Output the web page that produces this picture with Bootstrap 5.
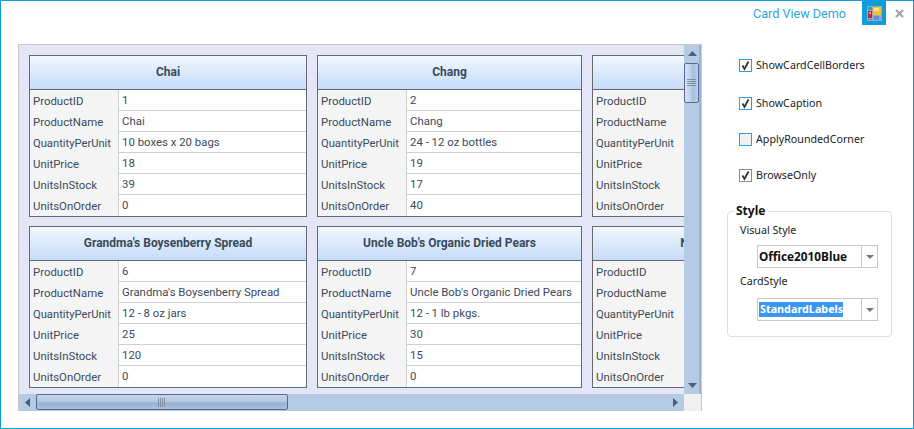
<!DOCTYPE html>
<html lang="en"><head><meta charset="utf-8"><title>Card View Demo</title>
<link href="https://cdn.jsdelivr.net/npm/bootstrap@5.3.0/dist/css/bootstrap.min.css" rel="stylesheet">
<style>
html,body{margin:0;background:#fff;overflow:hidden}
body{font-family:Roboto,"Noto Sans",sans-serif;font-size:11.4px;line-height:1;color:#3b4a5c}
.win{width:914px;height:429px;border:1px solid #0c9fdc;background:#fff;overflow:hidden}
.titlebar{height:24px;padding-right:1px}
.wintitle{color:#2ba4e0;font-size:12.6px;margin-right:16px;padding-top:3px}
.wintile{width:24px;height:24px;background:#0f9cd8}
.winclose{width:26px}
.viewer{width:684px;height:367px;margin:19px 0 0 17px;border:1px solid #c8c8c8;background:#e4e6f8}
.viewmain{height:349px}
.cardsarea{width:665px;height:349px;overflow:hidden;padding:10px 0 0 10px}
.cardgrid{display:grid;grid-template-columns:278px 265px 335px;grid-template-rows:162px 162px;gap:9px 10px;width:898px}
.pcard{border:1px solid #666a70;background:#fff;display:flex;flex-direction:column}
.pcap{height:34px;flex:none;border-bottom:1px solid #666a70;background:linear-gradient(#f1f7fe,#c5dcf9);font-weight:700;font-size:12px;color:#3a4a5a;padding-bottom:2px}
.prow{height:21px;flex:none;display:flex}
.plab{width:89px;flex:none;background:#f4f4f4;padding:6px 0 0 3px;white-space:nowrap;border-right:1px solid #cfcfcf}
.plab-q{font-size:11.2px}
.pval{flex:1;padding:5px 0 0 3px;border-bottom:1px solid #cfcfcf;white-space:nowrap}
.pcard-wide .plab{width:110px;border-right:0}
.prow:last-child .pval{border-bottom:0}
.vbar{width:17px;background:#b5cae3;border-right:2px solid #9bb3d3}
.hbar{height:17px;background:#b5cae3}
.sbtn{flex:none;width:17px;height:17px}
.vthumb{height:40px;width:15px;border:1px solid #55699c;border-radius:2px;background:linear-gradient(90deg,#d7e3f3 0,#bdd0e8 45%,#a6bcd9 60%,#bcd0e8 100%);margin-top:1px}
.hthumb{width:252px;height:16px;border:1px solid #55699c;border-radius:2px;background:linear-gradient(#c4d5ea,#b4c9e2 45%,#9ab2d1 60%,#a9c0dc)}
.corner{width:17px;height:17px;background:#f0f0f0}
.side{width:165px;margin:0 0 0 25px;padding-top:34px;font-family:"Noto Sans",sans-serif;font-size:10.7px;color:#222}
.chk{height:13px;margin-left:12px;white-space:nowrap}
.chk1{margin-bottom:25px}
.chk2{margin-bottom:23px}
.chk3{margin-bottom:23px}
.box{width:13px;height:13px;border:1px solid #29a0da;background:#fff;margin-right:4px;flex:none}
.box-off{background:#f1f1f1}
.box-gray{border-color:#8c8c8c}
.fld{margin-top:29px;height:126px;border:1px solid #d9dfe6;border-radius:4px;padding:13px 0 0 12px;position:relative}
.fldlegend{position:absolute;left:6px;top:-7px;background:#fff;padding:0 2px;font-weight:700;font-size:12px;color:#111}
.fldlabel{height:13px;color:#222}
.combo{width:121px;height:23px;margin:7px 0 0 17px;border:1px solid #c8c8c8;background:#fff;font-weight:700;font-size:11.8px;color:#111}
.combo2{margin-top:9px}
.comboval{flex:1;padding-left:1px}
.comboarrow{width:16px;border-left:1px solid #c8c8c8}
.sel{background:#3a97f0;color:#fff;height:15px;padding:2px 0 0 1px;display:inline-block;font-size:10.8px}
.lab2{margin-top:8px}
</style></head><body>
<div class="win d-flex flex-column">
 <div class="titlebar d-flex justify-content-end align-items-center flex-none">
  <div class="wintitle">Card View Demo</div>
  <div class="wintile d-flex align-items-center justify-content-center">
   <svg width="15" height="15" viewBox="0 0 15 15"><rect width="15" height="15" fill="#9ba9b4"/><rect x="1" y="1" width="4" height="3" fill="#3e97c9"/><rect x="6" y="1" width="8" height="8" fill="#f7c22a"/><rect x="7" y="2" width="5" height="3" fill="#fde27e"/><rect x="1" y="5" width="4" height="7" fill="#c0262b"/><rect x="2" y="6" width="2" height="2" fill="#ef9a8a"/><rect x="1" y="13" width="4" height="1" fill="#3e97c9"/><rect x="7" y="10" width="5" height="4" fill="#5b8fdb"/></svg>
  </div>
  <div class="winclose d-flex justify-content-center">
   <svg width="9" height="9" viewBox="0 0 9 9"><path d="M1 1L8 8M8 1L1 8" stroke="#a3a3a3" stroke-width="2.2" fill="none"/></svg>
  </div>
 </div>
 <div class="d-flex align-items-start">
  <div class="viewer d-flex flex-column">
   <div class="viewmain d-flex">
    <div class="cardsarea">
     <div class="cardgrid">
      <div class="pcard">
       <div class="pcap d-flex align-items-center justify-content-center">Chai</div>
       <div class="prow"><div class="plab">ProductID</div><div class="pval">1</div></div>
       <div class="prow"><div class="plab">ProductName</div><div class="pval">Chai</div></div>
       <div class="prow"><div class="plab plab-q">QuantityPerUnit</div><div class="pval">10 boxes x 20 bags</div></div>
       <div class="prow"><div class="plab">UnitPrice</div><div class="pval">18</div></div>
       <div class="prow"><div class="plab">UnitsInStock</div><div class="pval">39</div></div>
       <div class="prow"><div class="plab">UnitsOnOrder</div><div class="pval">0</div></div>
      </div>
      <div class="pcard">
       <div class="pcap d-flex align-items-center justify-content-center">Chang</div>
       <div class="prow"><div class="plab">ProductID</div><div class="pval">2</div></div>
       <div class="prow"><div class="plab">ProductName</div><div class="pval">Chang</div></div>
       <div class="prow"><div class="plab plab-q">QuantityPerUnit</div><div class="pval">24 - 12 oz bottles</div></div>
       <div class="prow"><div class="plab">UnitPrice</div><div class="pval">19</div></div>
       <div class="prow"><div class="plab">UnitsInStock</div><div class="pval">17</div></div>
       <div class="prow"><div class="plab">UnitsOnOrder</div><div class="pval">40</div></div>
      </div>
      <div class="pcard pcard-wide">
       <div class="pcap d-flex align-items-center justify-content-center">Aniseed Syrup</div>
       <div class="prow"><div class="plab">ProductID</div><div class="pval">3</div></div>
       <div class="prow"><div class="plab">ProductName</div><div class="pval">Aniseed Syrup</div></div>
       <div class="prow"><div class="plab plab-q">QuantityPerUnit</div><div class="pval">12 - 550 ml bottles</div></div>
       <div class="prow"><div class="plab">UnitPrice</div><div class="pval">10</div></div>
       <div class="prow"><div class="plab">UnitsInStock</div><div class="pval">13</div></div>
       <div class="prow"><div class="plab">UnitsOnOrder</div><div class="pval">70</div></div>
      </div>
      <div class="pcard">
       <div class="pcap d-flex align-items-center justify-content-center">Grandma's Boysenberry Spread</div>
       <div class="prow"><div class="plab">ProductID</div><div class="pval">6</div></div>
       <div class="prow"><div class="plab">ProductName</div><div class="pval">Grandma's Boysenberry Spread</div></div>
       <div class="prow"><div class="plab plab-q">QuantityPerUnit</div><div class="pval">12 - 8 oz jars</div></div>
       <div class="prow"><div class="plab">UnitPrice</div><div class="pval">25</div></div>
       <div class="prow"><div class="plab">UnitsInStock</div><div class="pval">120</div></div>
       <div class="prow"><div class="plab">UnitsOnOrder</div><div class="pval">0</div></div>
      </div>
      <div class="pcard">
       <div class="pcap d-flex align-items-center justify-content-center">Uncle Bob's Organic Dried Pears</div>
       <div class="prow"><div class="plab">ProductID</div><div class="pval">7</div></div>
       <div class="prow"><div class="plab">ProductName</div><div class="pval">Uncle Bob's Organic Dried Pears</div></div>
       <div class="prow"><div class="plab plab-q">QuantityPerUnit</div><div class="pval">12 - 1 lb pkgs.</div></div>
       <div class="prow"><div class="plab">UnitPrice</div><div class="pval">30</div></div>
       <div class="prow"><div class="plab">UnitsInStock</div><div class="pval">15</div></div>
       <div class="prow"><div class="plab">UnitsOnOrder</div><div class="pval">0</div></div>
      </div>
      <div class="pcard pcard-wide">
       <div class="pcap d-flex align-items-center justify-content-center">Northwoods Cranberry Sauce</div>
       <div class="prow"><div class="plab">ProductID</div><div class="pval">8</div></div>
       <div class="prow"><div class="plab">ProductName</div><div class="pval">Northwoods Cranberry Sauce</div></div>
       <div class="prow"><div class="plab plab-q">QuantityPerUnit</div><div class="pval">12 - 12 oz jars</div></div>
       <div class="prow"><div class="plab">UnitPrice</div><div class="pval">40</div></div>
       <div class="prow"><div class="plab">UnitsInStock</div><div class="pval">6</div></div>
       <div class="prow"><div class="plab">UnitsOnOrder</div><div class="pval">0</div></div>
      </div>
     </div>
    </div>
    <div class="vbar d-flex flex-column">
     <div class="sbtn d-flex align-items-center justify-content-center"><svg width="9" height="5" viewBox="0 0 9 5"><path d="M4.5 0L9 5H0Z" fill="#4c5d84"/></svg></div>
     <div class="vthumb d-flex align-items-center justify-content-center flex-none">
      <svg width="9" height="8" viewBox="0 0 9 8"><path d="M0 .5H9M0 2.5H9M0 4.5H9M0 6.5H9" stroke="#7f8ea6" stroke-width="1"/></svg>
     </div>
     <div class="flex-grow-1"></div>
     <div class="sbtn d-flex align-items-center justify-content-center"><svg width="9" height="5" viewBox="0 0 9 5"><path d="M4.5 5L9 0H0Z" fill="#4c5d84"/></svg></div>
    </div>
   </div>
   <div class="d-flex">
    <div class="hbar flex-grow-1 d-flex align-items-start">
     <div class="sbtn d-flex align-items-center justify-content-center"><svg width="5" height="9" viewBox="0 0 5 9"><path d="M0 4.5L5 0V9Z" fill="#4c5d84"/></svg></div>
     <div class="hthumb d-flex align-items-center justify-content-center flex-none">
      <svg width="8" height="9" viewBox="0 0 8 9"><path d="M.5 0V9M2.5 0V9M4.5 0V9M6.5 0V9" stroke="#7f8ea6" stroke-width="1"/></svg>
     </div>
     <div class="flex-grow-1"></div>
     <div class="sbtn d-flex align-items-center justify-content-center"><svg width="5" height="9" viewBox="0 0 5 9"><path d="M5 4.5L0 0V9Z" fill="#4c5d84"/></svg></div>
    </div>
    <div class="corner"></div>
   </div>
  </div>
  <div class="side">
   <div class="chk chk1 d-flex align-items-center"><span class="box d-flex"><svg width="11" height="11" viewBox="0 0 11 11"><path d="M2.5 5.5L4.5 9L8.5 1.5" stroke="#333" stroke-width="1.8" fill="none"/></svg></span>ShowCardCellBorders</div>
   <div class="chk chk2 d-flex align-items-center"><span class="box d-flex"><svg width="11" height="11" viewBox="0 0 11 11"><path d="M2.5 5.5L4.5 9L8.5 1.5" stroke="#333" stroke-width="1.8" fill="none"/></svg></span>ShowCaption</div>
   <div class="chk chk3 d-flex align-items-center"><span class="box box-off"></span>ApplyRoundedCorner</div>
   <div class="chk d-flex align-items-center"><span class="box box-gray d-flex"><svg width="11" height="11" viewBox="0 0 11 11"><path d="M2.5 5.5L4.5 9L8.5 1.5" stroke="#333" stroke-width="1.8" fill="none"/></svg></span>BrowseOnly</div>
   <div class="fld">
    <div class="fldlegend">Style</div>
    <div class="fldlabel">Visual Style</div>
    <div class="combo d-flex">
     <div class="comboval d-flex align-items-center">Office2010Blue</div>
     <div class="comboarrow d-flex align-items-center justify-content-center"><svg width="8" height="4" viewBox="0 0 8 4"><path d="M0 0H8L4 4Z" fill="#777"/></svg></div>
    </div>
    <div class="fldlabel lab2">CardStyle</div>
    <div class="combo combo2 d-flex">
     <div class="comboval d-flex align-items-center"><span class="sel">StandardLabels</span></div>
     <div class="comboarrow d-flex align-items-center justify-content-center"><svg width="8" height="4" viewBox="0 0 8 4"><path d="M0 0H8L4 4Z" fill="#777"/></svg></div>
    </div>
   </div>
  </div>
 </div>
</div>
</body></html>
